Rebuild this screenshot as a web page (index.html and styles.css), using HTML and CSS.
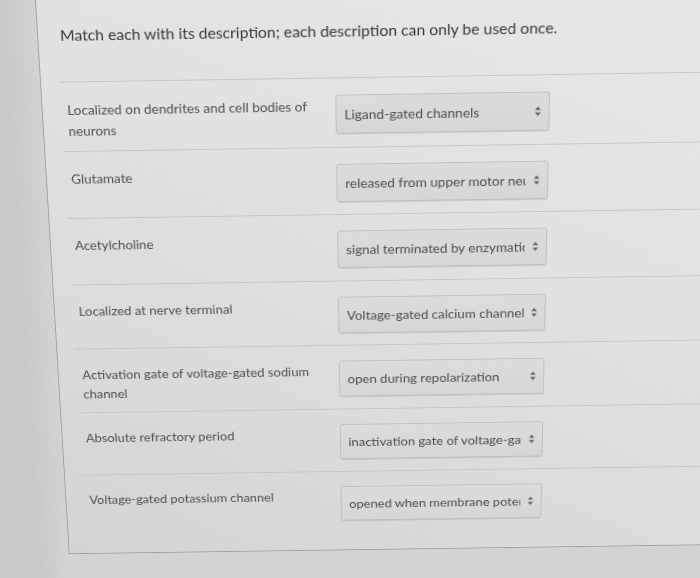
FILE: index.html
```html
<!DOCTYPE html>
<html>
<head>
<meta charset="utf-8">
<link rel="stylesheet" href="styles.css">
</head>
<body>
<div class="screen">
  <div class="panel">
    <div class="heading">Match each with its description; each description can only be used once.</div>
    <div class="list">
      <div class="row">
        <div class="label">Localized on dendrites and cell bodies of neurons</div>
        <div class="select"><span class="value">Ligand-gated channels</span><svg class="arrows" viewBox="0 0 6 11" width="6" height="11"><path d="M0 4.2 L3 0.5 L6 4.2 Z M0 6.8 L3 10.5 L6 6.8 Z"/></svg></div>
      </div>
      <div class="row">
        <div class="label">Glutamate</div>
        <div class="select"><span class="value">released from upper motor neurons</span><svg class="arrows" viewBox="0 0 6 11" width="6" height="11"><path d="M0 4.2 L3 0.5 L6 4.2 Z M0 6.8 L3 10.5 L6 6.8 Z"/></svg></div>
      </div>
      <div class="row">
        <div class="label">Acetylcholine</div>
        <div class="select"><span class="value">signal terminated by enzymatic degradation</span><svg class="arrows" viewBox="0 0 6 11" width="6" height="11"><path d="M0 4.2 L3 0.5 L6 4.2 Z M0 6.8 L3 10.5 L6 6.8 Z"/></svg></div>
      </div>
      <div class="row">
        <div class="label">Localized at nerve terminal</div>
        <div class="select"><span class="value">Voltage-gated calcium channel</span><svg class="arrows" viewBox="0 0 6 11" width="6" height="11"><path d="M0 4.2 L3 0.5 L6 4.2 Z M0 6.8 L3 10.5 L6 6.8 Z"/></svg></div>
      </div>
      <div class="row">
        <div class="label">Activation gate of voltage-gated sodium channel</div>
        <div class="select"><span class="value">open during repolarization</span><svg class="arrows" viewBox="0 0 6 11" width="6" height="11"><path d="M0 4.2 L3 0.5 L6 4.2 Z M0 6.8 L3 10.5 L6 6.8 Z"/></svg></div>
      </div>
      <div class="row">
        <div class="label">Absolute refractory period</div>
        <div class="select"><span class="value">inactivation gate of voltage-gated sodium channel</span><svg class="arrows" viewBox="0 0 6 11" width="6" height="11"><path d="M0 4.2 L3 0.5 L6 4.2 Z M0 6.8 L3 10.5 L6 6.8 Z"/></svg></div>
      </div>
      <div class="row">
        <div class="label">Voltage-gated potassium channel</div>
        <div class="select"><span class="value">opened when membrane potential is depolarized</span><svg class="arrows" viewBox="0 0 6 11" width="6" height="11"><path d="M0 4.2 L3 0.5 L6 4.2 Z M0 6.8 L3 10.5 L6 6.8 Z"/></svg></div>
      </div>
    </div>
  </div>
</div>
</body>
</html>
```

FILE: styles.css
```css
html, body {
  margin: 0;
  padding: 0;
  width: 700px;
  height: 578px;
  overflow: hidden;
  background: #c9c9c7;
}

.screen {
  width: 780px;
  height: 680px;
  margin-top: -20px;
  padding-top: 20px;
  box-sizing: border-box;
  background: linear-gradient(90deg, #c8c8c6 0px, #d3d3d1 35px);
  transform-origin: 420px 20px;
  transform: perspective(1000px) rotateX(-9deg) skewY(-0.9deg);
  font-family: Lato, "Open Sans", sans-serif;
}

.panel {
  margin-left: 35px;
  margin-top: -20px;
  padding-top: 20px;
  border-left: 1px solid #a2a2a0;
  border-bottom: 1px solid #9e9e9c;
  background: linear-gradient(205deg, #e8e8e7 0%, #e1e1e0 45%, #d4d4d2 100%);
  padding-bottom: 22px;
}

.heading {
  padding: 20px 0 0 22px;
  font-size: 15.8px;
  line-height: 20px;
  color: #3a3a3a;
}

.list {
  margin-top: 38px;
  margin-left: 19px;
}

.row {
  display: flex;
  align-items: flex-start;
  height: 72.6px;
  box-sizing: border-box;
  padding-top: 14px;
  border-top: 1px solid #c6c6c4;
}

.label {
  width: 273px;
  padding-left: 6px;
  padding-top: 4px;
  font-size: 13.8px;
  line-height: 22px;
  color: #505050;
  flex: none;
}

.select {
  flex: none;
  width: 218px;
  height: 41px;
  margin-top: 3px;
  box-sizing: border-box;
  display: flex;
  align-items: center;
  padding-left: 8px;
  padding-right: 8px;
  border: 1px solid #c0c0be;
  border-radius: 3px;
  background: linear-gradient(180deg, #dcdcdb, #d6d6d5);
  box-shadow: 0 1px 1px rgba(0, 0, 0, 0.1);
}

.value {
  flex: 1;
  white-space: nowrap;
  overflow: hidden;
  font-size: 14px;
  color: #4e4e4e;
  margin-right: 8px;
}

.arrows {
  flex: none;
  fill: #686868;
}
```
